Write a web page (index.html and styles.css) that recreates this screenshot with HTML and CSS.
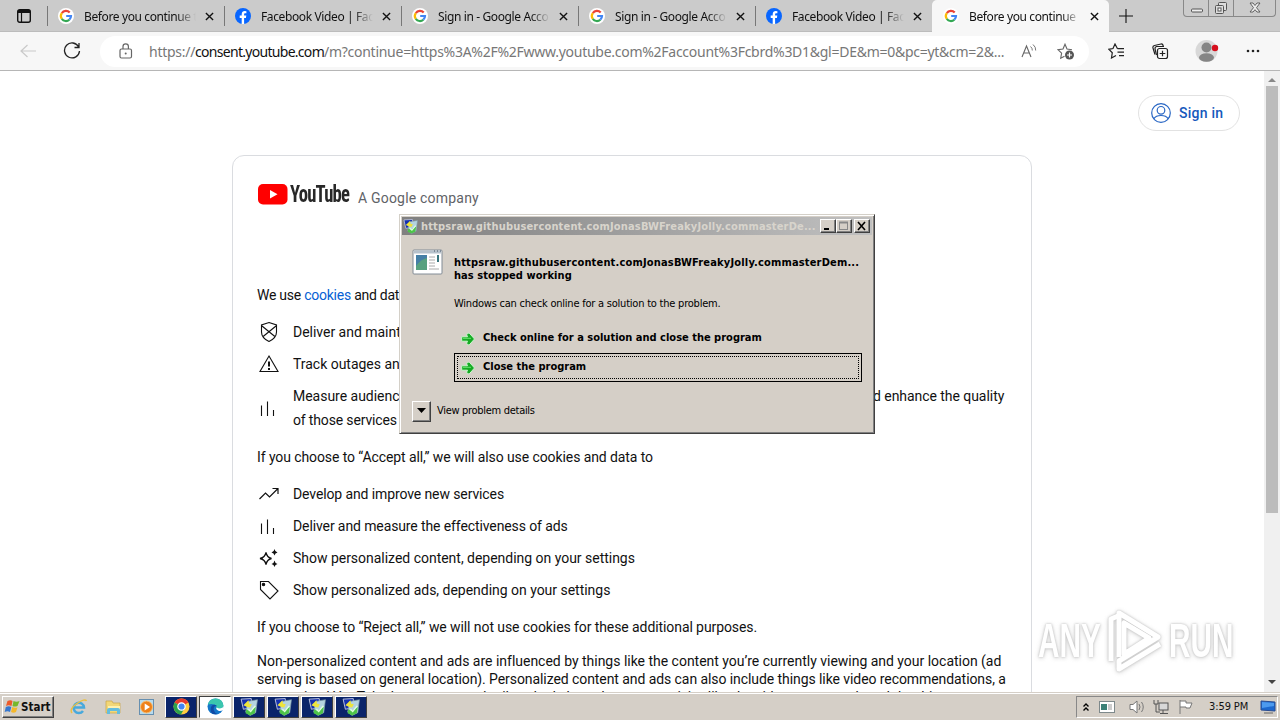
FILE: index.html
```html
<!DOCTYPE html>
<html lang="en">
<head>
<meta charset="utf-8">
<title>Before you continue to YouTube</title>
<link rel="stylesheet" href="styles.css">
</head>
<body>
<svg class="defs" aria-hidden="true">
  <symbol id="google" viewBox="0 0 16 16"><circle cx="8" cy="8" r="8" fill="#fff"/><g fill="none" stroke-width="2.2"><path d="M3.8 5.1A5 5 0 0 1 11.7 4.6" stroke="#ea4335"/><path d="M3.8 5.1A5 5 0 0 0 3.8 10.9" stroke="#fbbc05"/><path d="M3.8 10.9A5 5 0 0 0 11.3 11.7" stroke="#34a853"/><path d="M11.3 11.7A5 5 0 0 0 13 8H8.2" stroke="#4285f4"/></g></symbol>
  <symbol id="facebook" viewBox="0 0 16 16"><circle cx="8" cy="8" r="8" fill="#0866ff"/><path d="M6.700 16V10H4.700V7.600h2V6.200C6.700 3.800 8 3 9.700 3l1.700.2v2h-1c-1 0-1.300.5-1.300 1.300v1.100h2.200L10.900 10H9.100v6z" fill="#fff"/></symbol>
  <symbol id="close" viewBox="0 0 10 10"><path d="M1 1l8 8M9 1L1 9" stroke="#111" stroke-width="1.5"/></symbol>
  <symbol id="bars" viewBox="0 0 24 24"><path d="M4.500 9.500V20M10.500 5.500V20M16.500 14V20" stroke="#111" stroke-width="1.100" fill="none"/></symbol>
  <symbol id="app" viewBox="0 0 16 16"><path d="M1 1l9-.5.5 8L3 10z" fill="#1430b0" stroke="#c9cfe2" stroke-width=".8"/><path d="M7 3l8.500-1.500L14 13l-5 2.500-4-3z" fill="#b4d3e0" stroke="#7d99a6" stroke-width=".6"/><path d="M3 6.500L7.500 2l.5 3 2.500.5L9 8.500 6.500 8z" fill="#eee43c"/><path d="M5.500 10l3 1.500L14 8l-.8 5.500L9 15.500l-4-2z" fill="#4ec44a"/><path d="M7.500 10l2 2 4-5" fill="none" stroke="#e2ffdf" stroke-width="1.200"/></symbol>
  <symbol id="arrow" viewBox="0 0 14 14"><path d="M.7 4.800h5.800L5.500 2.500 8 .8 13.500 7 8 13.200 5.500 11.500l1-2.300H.7z" fill="#16aa24" stroke="#c9f6cb" stroke-width="1"/><path d="M2 6.300h8" stroke="#6be571"/></symbol>
</svg>
<div class="screen">
  <header class="tabbar">
    <div class="tab-menu"><svg width="14" height="14" viewBox="0 0 14 14"><rect x=".7" y=".7" width="12.600" height="12.600" rx="2" fill="none" stroke="#111" stroke-width="1.4"/><path d="M1 1h12v3H1z" fill="#111"/><path d="M4.500 4v9" stroke="#111" stroke-width="1.2"/></svg></div>
    <div class="tab"><svg class="fav"><use href="#google"/></svg><span class="tab-title">Before you continue t</span><svg class="x"><use href="#close"/></svg></div>
    <div class="tab"><svg class="fav"><use href="#facebook"/></svg><span class="tab-title">Facebook Video | Fac</span><svg class="x"><use href="#close"/></svg></div>
    <div class="tab"><svg class="fav"><use href="#google"/></svg><span class="tab-title">Sign in - Google Acco</span><svg class="x"><use href="#close"/></svg></div>
    <div class="tab"><svg class="fav"><use href="#google"/></svg><span class="tab-title">Sign in - Google Acco</span><svg class="x"><use href="#close"/></svg></div>
    <div class="tab"><svg class="fav"><use href="#facebook"/></svg><span class="tab-title">Facebook Video | Fac</span><svg class="x"><use href="#close"/></svg></div>
    <div class="tab active"><svg class="fav"><use href="#google"/></svg><span class="tab-title">Before you continue</span><svg class="x"><use href="#close"/></svg></div>
    <div class="newtab"><svg width="14" height="14"><path d="M7 0v14M0 7h14" stroke="#111" stroke-width="1.1"/></svg></div>
    <div class="caption">
      <span class="cap"><svg width="25" height="16"><rect x="7.500" y="9" width="11" height="3" rx="1" fill="#eee" stroke="#555"/></svg></span>
      <span class="cap"><svg width="25" height="16" fill="#ddd" stroke="#555"><rect x="9.500" y="2.500" width="8" height="8" rx="1"/><rect x="6.500" y="5.500" width="8" height="8" rx="1"/><rect x="9" y="8" width="3" height="3" fill="#fff"/></svg></span>
      <span class="cap wide"><svg width="42" height="16"><path d="M16 3h3l2 2.500L23 3h3l-3.500 4.700L26 12h-3l-2-2.300L19 12h-3l3.500-4.300z" fill="#eee" stroke="#555" stroke-width=".9"/></svg></span>
    </div>
  </header>
  <div class="toolbar">
    <div class="tool back"><svg width="16" height="14"><path d="M16 7H1M7.500 1L1 7l6.500 6" fill="none" stroke="#c9c9c9" stroke-width="1.2"/></svg></div>
    <div class="tool reload"><svg width="18" height="18"><path d="M15.700 5A7.500 7.500 0 1 0 16.500 9M16 1v4.500h-4.500" fill="none" stroke="#222" stroke-width="1.3"/></svg></div>
    <div class="address">
      <svg class="lock" width="14" height="16"><rect x="1" y="6" width="11.500" height="9" rx="1.500" fill="none" stroke="#666" stroke-width="1.200"/><path d="M4 6V3.500a2.700 2.700 0 0 1 5.400 0V6" fill="none" stroke="#666" stroke-width="1.200"/><circle cx="6.700" cy="10.500" r="1" fill="#666"/></svg>
      <span class="url">https://<b>consent.youtube.com</b>/m?continue=https%3A%2F%2Fwww.youtube.com%2Faccount%3Fcbrd%3D1&amp;gl=DE&amp;m=0&amp;pc=yt&amp;cm=2&amp;...</span>
      <svg class="read" width="17" height="16"><path d="M1 14L5.500 3 10 14M2.700 10h5.600" fill="none" stroke="#666" stroke-width="1.100"/><path d="M9.500 3.500q2 1.500 1.800 4M12 1.500q3 2.500 2.700 6" fill="none" stroke="#777"/></svg>
      <svg class="addfav" width="18" height="17"><path d="M7.500 13.200L3.700 15.200l.9-5L1 6.700l5-.7L8 1.200l2 4.800 5 .7" fill="none" stroke="#666" stroke-width="1.100"/><circle cx="12.500" cy="12" r="4.500" fill="#555"/><path d="M12.500 9.500v5M10 12h5" stroke="#fff" stroke-width="1.200"/></svg>
    </div>
    <div class="tool fav-tool"><svg width="17" height="16" fill="none" stroke="#222" stroke-width="1.200"><path d="M9.500 5.700L7 1 5 5.500.8 6.300l3.500 3.400L3.500 15 8 12.500M9.500 5.700H16M9.500 9.200H16M11 12.700h5"/></svg></div>
    <div class="tool coll-tool"><svg width="17" height="17" fill="none" stroke="#222" stroke-width="1.200"><path d="M3 11.500L1 5Q.5 3 2.500 2.500L9 1q1.700-.3 2.300 2"/><path d="M4.500 12L3 6q-.3-2 1.500-2.500L12 3.500"/><rect x="5.500" y="5.500" width="10" height="10" rx="2" fill="#f7f7f7"/><path d="M10.500 7.700v5.600M7.700 10.500h5.600"/></svg></div>
    <div class="tool profile"><svg width="24" height="24"><circle cx="11.500" cy="12" r="11" fill="#d8d8d8"/><circle cx="11.500" cy="8.500" r="5" fill="#858585"/><ellipse cx="11.500" cy="18.500" rx="7.500" ry="4.300" fill="#858585"/><circle cx="20" cy="9" r="3.200" fill="#d60f1d"/></svg></div>
    <div class="tool more"><svg width="14" height="4" fill="#222"><circle cx="2" cy="2" r="1.300"/><circle cx="7" cy="2" r="1.300"/><circle cx="12" cy="2" r="1.300"/></svg></div>
  </div>
  <div class="viewport">
    <main class="page">
      <div class="topline"><a class="signin"><svg width="20" height="20" fill="none" stroke="#2866c4" stroke-width="1.200"><circle cx="10" cy="10" r="9.300"/><circle cx="10" cy="7.300" r="3.800"/><path d="M2.800 15.700q2-3.200 7.200-3.200t7.200 3.200"/></svg><span>Sign in</span></a></div>
      <section class="card">
        <div class="brand"><svg width="30" height="21"><rect width="29.500" height="20.500" rx="5" fill="#f00"/><path d="M12 6l7.500 4.300L12 14.600z" fill="#fff"/></svg><span class="yt">YouTube</span><span class="company">A Google company</span></div>
        <p class="intro">We use <a>cookies</a> and data to</p>
        <div class="item"><svg class="ico" viewBox="0 0 24 24" fill="none" stroke="#111" stroke-width="1.100"><path d="M12 2.500L19.500 5v7q0 6-7.500 9.500Q4.500 18 4.500 12V5zM5 6l13.500 11M19 6L5.500 17"/></svg><span>Deliver and maintain Google</span></div>
        <div class="item"><svg class="ico" viewBox="0 0 24 24" fill="none" stroke="#111" stroke-width="1.100"><path d="M12 4L21 19.500H3z"/><path d="M12 9.500v5M12 16v2" stroke-width="2"/></svg><span>Track outages and protect</span></div>
        <div class="item tall"><svg class="ico"><use href="#bars"/></svg><span><i class="l1">Measure audience engagement and site statistics to understand how our services an</i><i class="l1end">d enhance the quality</i><br><i class="l2">of those services</i></span></div>
        <p class="para accept">If you choose to “Accept all,” we will also use cookies and data to</p>
        <div class="item snug"><svg class="ico" viewBox="0 0 24 24" fill="none" stroke="#111" stroke-width="1.200"><path d="M2.500 17l6-6 4 4L21 6.500M15.500 6.500H21V12"/></svg><span>Develop and improve new services</span></div>
        <div class="item snug"><svg class="ico"><use href="#bars"/></svg><span>Deliver and measure the effectiveness of ads</span></div>
        <div class="item"><svg class="ico" viewBox="0 0 24 24"><path d="M9 6.500q1 5 5.500 6-4.500 1-5.500 6-1-5-6-6 5-1 6-6z" fill="none" stroke="#111" stroke-width="1.300"/><path d="M17.500 3q.5 3 3 3.500-2.500.5-3 3-.5-2.500-3-3 2.500-.5 3-3.500zM17.500 14.500q.5 3 3 3.500-2.500.5-3 3-.5-2.500-3-3 2.500-.5 3-3.500z" fill="#111"/></svg><span>Show personalized content, depending on your settings</span></div>
        <div class="item"><svg class="ico" viewBox="0 0 24 24" fill="none" stroke="#111" stroke-width="1.100"><path d="M3.500 3.500v8l9.500 9.500 8-8-9.500-9.500z"/><circle cx="6.500" cy="6.500" r="1.200" fill="#111"/></svg><span>Show personalized ads, depending on your settings</span></div>
        <p class="para reject">If you choose to “Reject all,” we will not use cookies for these additional purposes.</p>
        <div class="fine"><div class="f1">Non-personalized content and ads are influenced by things like the content you’re currently viewing and your location (ad</div><div class="f2">serving is based on general location). Personalized content and ads can also include things like video recommendations, a</div><div class="f3">customized YouTube homepage, and tailored ads based on past activity, like the videos you watch and the things</div></div>
      </section>
    </main>
    <div class="scroll"><svg width="16" height="15"><path d="M4 11l4-4 4 4z" fill="#888"/></svg><div class="thumb"></div><svg class="down" width="16" height="15"><path d="M4 4l4 4 4-4z" fill="#444"/></svg></div>
  </div>
  <footer class="taskbar">
    <div class="start"><svg width="17" height="16" viewBox="0 0 16 16"><path d="M3 2q3-1.500 5 0L7 7Q4 5.500 1.500 7z" fill="#ed5b2b"/><path d="M9 2q3 1.600 6 0l-2 5q-3 1-5 0z" fill="#77b82b"/><path d="M1.300 8q3-1.500 5.500 0L5.500 13Q3 11.500.2 13z" fill="#3577cf"/><path d="M7.800 8q2.500 1.500 5.200.3L11.500 13q-2.500 1.500-5 0z" fill="#f5b82a"/></svg><span>Start</span></div>
    <div class="quick">
      <svg width="18" height="18" fill="none"><path d="M4.500 9.500H14A5.200 5.200 0 1 0 13 13" stroke="#48a9dc" stroke-width="2.500"/><path d="M2 15Q-1 11 7 5.500T16.500 3" stroke="#ebc043" stroke-width="1.500"/></svg>
      <svg width="18" height="18"><path d="M2 3h6l1 2h7v10H2z" fill="#f2d778" stroke="#caa346" stroke-width=".7"/><path d="M4 8h12v4H4z" fill="#fff1ad"/><path d="M3 16v-4q0-2 2-2h9q2 0 2 2v4h-3v-3H6v3z" fill="#65bddd"/></svg>
      <svg width="18" height="18"><rect x="1.500" y="1.500" width="14" height="15" fill="#b8dbed" stroke="#668fb0"/><circle cx="8.500" cy="9" r="6" fill="#ee8119" stroke="#f9bf74"/><path d="M6.700 5.500v7l5.300-3.500z" fill="#fff"/></svg>
    </div>
    <div class="tasks">
      <div class="task"><svg width="17" height="17"><circle cx="8.500" cy="8.500" r="8" fill="#ffcd40"/><path d="M8.500 8.500L1.600 4.500A8 8 0 0 1 15.400 4.500z" fill="#e83a2e"/><path d="M1.600 4.500A8 8 0 0 0 8 16.500L11 11 8.500 8.500z" fill="#2da24b"/><circle cx="8.500" cy="8.500" r="3.700" fill="#4285f4" stroke="#fff" stroke-width="1.200"/></svg></div>
      <div class="task selected"><svg width="17" height="17"><circle cx="8.500" cy="8.500" r="8" fill="#1476c9"/><path d="M.8 6.500Q2.500.5 8.500.5q7 0 8 7-.2 4-6 3.500l-1.500-.7q1-1 .3-2.500-2-2.500-8.500-1.300z" fill="#3bc6ae"/><path d="M9.500 9.500q-1 2 2 3.300 2 .7 5-.8l.5-4.500q-1 3-5 3z" fill="#fff"/><path d="M4 9q2-4 6-1.200Q6 8 6.800 12q.7 3 4 4.200Q2 17.500 4 9" fill="#124aa4"/></svg></div>
      <div class="task"><svg width="18" height="18"><use href="#app"/></svg></div><div class="task"><svg width="18" height="18"><use href="#app"/></svg></div><div class="task"><svg width="18" height="18"><use href="#app"/></svg></div><div class="task"><svg width="18" height="18"><use href="#app"/></svg></div>
    </div>
    <div class="tray">
      <svg width="8" height="10"><path d="M1.500 4.500L4 2l2.500 2.500M1.500 8.500L4 6l2.500 2.500" fill="none" stroke="#000" stroke-width="1.400"/></svg>
      <svg class="t2" width="17" height="14"><rect x=".5" y="1.500" width="15" height="11" fill="#fff" stroke="#7e898b"/><path d="M2 4h6v6H2z" fill="#3c8177"/><path d="M9 5h4M9 7h4M9 9h4" stroke="#999"/></svg>
      <svg class="t3" width="17" height="16" fill="none" stroke="#777"><path d="M1 5.500h3L8 2v12l-4-3.500H1z" fill="#fff"/><path d="M10 5q2 3 0 6M12.500 3q3.500 5 0 10"/></svg>
      <svg class="t4" width="17" height="16" stroke="#555"><path d="M1 1v4h4V1M3 5v8h4" fill="none"/><rect x="6" y="4" width="9" height="7" fill="#d8d8d8"/><path d="M10 11v3M7 14.500h8"/></svg>
      <svg class="t5" width="17" height="16"><path d="M2 1v14M2 2h6v2h6l-2 5H8V8H2" fill="#fff" stroke="#777"/></svg>
      <span class="clock">3:59 PM</span>
      <svg class="desk" width="17" height="14"><path d="M1 1l14 1v9L1 10z" fill="#1d68ce" stroke="#2b4d91"/><path d="M2 2l12 1v3L2 8z" fill="#4d9aee"/><path d="M4 13h9" stroke="#666"/></svg>
    </div>
  </footer>
  <div class="watermark"><span>ANY</span><svg width="56" height="64" viewBox="0 0 56 64" fill="none" stroke="#fff" stroke-width="5" stroke-linejoin="round"><path d="M12 48V4l39 24-39 24v8L53 35"/><path d="M4 52V10l7-3M17 14v31l25-16z"/></svg><span class="run">RUN</span></div>
  <div class="dialog">
    <div class="titlebar"><svg width="15" height="15"><use href="#app"/></svg><span class="dtitle">httpsraw.githubusercontent.comJonasBWFreakyJolly.commasterDe...</span><span class="win"><svg><path d="M3 9h5" stroke="#000" stroke-width="2"/></svg></span><span class="win"><svg><rect x="2.500" y="2.500" width="8" height="7" fill="none" stroke="#888"/><path d="M2 2.500h9" stroke="#888" stroke-width="2"/></svg></span><span class="win last"><svg><path d="M3 2l7 8M10 2l-7 8" stroke="#000" stroke-width="1.600"/></svg></span></div>
    <div class="dbody">
      <svg class="program" width="32" height="27"><rect x="1" y="1" width="29" height="24" rx="1" fill="#fff" stroke="#828c96"/><path d="M2 3h27" stroke="#b7c2cc" stroke-width="3"/><path d="M22 2h1M25 2h1M28 2h1" stroke="#456"/><rect x="4" y="6" width="11" height="15" fill="#457fa6"/><path d="M4 17q5-7 11-8v12H4z" fill="#57a17f"/><path d="M17 8h6M17 11h6M17 14h6M17 17h6M17 20h10" stroke="#aaa"/><path d="M26 6v7" stroke="#36747d" stroke-width="2"/></svg>
      <div class="dcontent"><div class="headline"><span class="h1">httpsraw.githubusercontent.comJonasBWFreakyJolly.commasterDem...</span><br><span class="h2">has stopped working</span></div><div class="msg">Windows can check online for a solution to the problem.</div><div class="choice"><svg width="14" height="14"><use href="#arrow"/></svg><span class="c1">Check online for a solution and close the program</span></div><div class="choice focused"><svg width="14" height="14"><use href="#arrow"/></svg><span class="c1">Close the program</span></div></div>
    </div>
    <div class="details"><span class="drop"><svg width="10" height="6"><path d="M0 0h9L4.500 5z" fill="#000"/></svg></span><span class="dlabel">View problem details</span></div>
  </div>
</div>
</body>
</html>
```
FILE: styles.css
```css
* { box-sizing: border-box; }
body { margin: 0; overflow: hidden; background: #fff; color: #111; }
svg { flex: none; display: block; }
.defs { position: absolute; width: 0; height: 0; }
.screen { width: 1280px; height: 720px; display: flex; flex-direction: column; position: relative; overflow: hidden; }
.tabbar { height: 32px; flex: none; display: flex; background: #cbcbcb; border-bottom: 1px solid #bcbcbc; font: 12px "Noto Sans", sans-serif; }
.tab-menu { width: 47px; padding: 9px 0 0 17px; }
.tab { width: 177px; height: 32px; padding: 0 9px 0 11px; display: flex; align-items: center; position: relative; }
.tab::before { content: ""; width: 1px; height: 20px; background: #777; position: absolute; left: 0; top: 6px; }
.fav { width: 16px; height: 16px; }
.tab-title { width: 113px; margin-left: 10px; overflow: hidden; white-space: nowrap; letter-spacing: -.38px; mask-image: linear-gradient(90deg, #000 82%, transparent 99%); }
.x { width: 9px; height: 9px; margin-left: 8px; margin-top: 1px; }
.active { background: #f7f7f7; border-radius: 5px 5px 0 0; }
.active::before { display: none; }
.newtab { width: 74px; padding: 9px 0 0 10px; }
.caption { display: flex; height: 17px; border: 1px solid #888; border-top: 0; border-radius: 0 0 4px 4px; overflow: hidden; width: 93px; }
.cap { width: 25px; border-right: 1px solid #888; }
.cap.wide { width: 42px; border: 0; }
.toolbar { height: 39px; flex: none; background: #f7f7f7; border-bottom: 1px solid #b6b6b6; display: flex; align-items: center; }
.tool { display: flex; justify-content: center; }
.back { width: 56px; }
.reload { width: 31px; }
.address { width: 989px; height: 31px; margin-left: 13px; border-radius: 16px; background: #fff; display: flex; align-items: center; padding-left: 19px; }
.url { width: 866px; margin-left: 16px; white-space: nowrap; color: #777; font: 14px "Noto Sans", sans-serif; letter-spacing: -.27px; }
.url b { font-weight: 400; color: #111; letter-spacing: -.71px; }
.read { margin-left: 6px; }
.addfav { margin-left: 19px; }
.fav-tool { width: 54px; }
.coll-tool { width: 34px; }
.profile { width: 60px; }
.more { width: 32px; }
.viewport { flex: 1; min-height: 0; display: flex; overflow: hidden; }
.page { width: 1264px; font: 14px/24px Roboto, sans-serif; }
.topline { height: 84px; display: flex; justify-content: flex-end; padding: 24px 24px 0 0; }
.signin { width: 102px; height: 36px; border: 1px solid #e2e2e2; border-radius: 18px; display: flex; align-items: center; gap: 8px; padding-left: 12px; color: #1558bc; font-weight: 500; letter-spacing: .25px; }
.card { width: 800px; height: 650px; margin-left: 232px; border: 1px solid #dadce0; border-radius: 12px; padding: 26px 24px; white-space: nowrap; }
.brand { display: flex; height: 28px; align-items: flex-start; padding: 2px 0 0 1px; }
.yt { font: 700 23px/24px "Roboto Condensed", Roboto, sans-serif; letter-spacing: -1px; margin: -1px 0 0 2px; width: 60px; transform: scaleX(.81); transform-origin: left; color: #282828; }
.company { color: #5f6368; margin: 2px 0 0 8px; letter-spacing: .2px; }
.intro { margin: 73px 0 9px; letter-spacing: -.25px; }
.intro a { color: #065fd4; }
.item { height: 32px; display: flex; align-items: center; gap: 12px; letter-spacing: -.02px; }
.snug { letter-spacing: -.11px; }
.item i { font-style: normal; }
.ico { width: 24px; height: 24px; }
.tall { height: 56px; }
.l1 { display: inline-block; width: 580px; overflow: hidden; vertical-align: top; }
.l1end { letter-spacing: -.05px; }
.l2 { letter-spacing: -.15px; }
.accept { margin: 9px 0 6px; line-height: 24px; height: 27px; letter-spacing: -.09px; }
.reject { margin: 9px 0 13px; line-height: 24px; letter-spacing: -.085px; }
.fine { line-height: 18px; }
.f1 { letter-spacing: -.015px; }
.f2 { letter-spacing: -.075px; }
.scroll { width: 16px; background: #f0f0f0; }
.scroll .thumb { height: 427px; width: 12px; margin: 0 2px; background: #bcbcbc; }
.down { margin-top: 163px; }
.taskbar { height: 28px; flex: none; background: #d5cfc7; border-top: 1px solid #d5cfc7; box-shadow: inset 0 1px #fff; display: flex; align-items: center; padding: 2px; font: 11px "DejaVu Sans Condensed", sans-serif; }
.start { width: 52px; height: 22px; display: flex; align-items: center; padding-left: 1px; font-weight: 700; font-size: 11.5px; border: 1px solid; border-color: #fff #404040 #404040 #fff; box-shadow: inset -1px -1px #808080; }
.quick { display: flex; gap: 16px; margin-left: 16px; width: 95px; }
.tasks { display: flex; gap: 2px; }
.task { width: 32px; height: 22px; display: grid; place-items: center; background: #0a246a; border: 1px solid; border-color: #fff #404040 #404040 #fff; }
.selected { background: #fff; border-color: #404040 #fff #fff #404040; }
.tray { margin-left: auto; width: 202px; height: 22px; display: flex; align-items: center; border: 1px solid; border-color: #888 #fff #fff #888; padding-left: 5px; }
.t2 { margin-left: 9px; }.t3 { margin-left: 13px; }.t4 { margin-left: 7px; }.t5 { margin-left: 8px; }
.clock { margin-left: 14px; width: 51px; white-space: nowrap; letter-spacing: -.1px; }
.watermark { position: absolute; left: 1038px; top: 609px; display: flex; align-items: center; color: #fff; font: 700 48px/64px "Liberation Sans", sans-serif; filter: drop-shadow(0 0 1px #aaa) drop-shadow(0 1px 2px #ccc); opacity: .75; }
.watermark span { width: 64px; transform: scaleX(.62); transform-origin: left; }
.watermark svg { margin-left: 5px; }.watermark .run { margin-left: 6px; }
.dialog { position: absolute; left: 399px; top: 214px; width: 476px; height: 220px; background: #d5cfc7; border: 1px solid; border-color: #d4d0c8 #404040 #404040 #d4d0c8; box-shadow: inset 1px 1px #fff, inset -1px -1px #808080; padding: 2px; font: 11px/13px "DejaVu Sans Condensed", sans-serif; color: #000; white-space: nowrap; }
.titlebar { height: 18px; background: linear-gradient(90deg, #808080, #c0c0c0); display: flex; align-items: center; padding: 0 2px 0 1px; color: #d8d4cc; font-weight: 700; }
.dtitle { margin-left: 3px; width: 399px; letter-spacing: .17px; }
.win { width: 16px; height: 14px; background: #d5cfc7; border: 1px solid; border-color: #fff #404040 #404040 #fff; box-shadow: inset -1px -1px #808080; }
.win svg { width: 14px; height: 12px; }
.last { margin-left: 2px; }
.dbody { height: 161px; display: flex; padding: 14px 9px 0 10px; }
.dcontent { margin-left: 10px; padding-top: 7px; width: 408px; }
.headline, .choice { font-weight: 700; }
.h1 { letter-spacing: .17px; }
.h2 { letter-spacing: .05px; }
.msg { margin: 15px 0 14px; letter-spacing: -.22px; }
.choice { height: 29px; width: 408px; padding-left: 6px; display: flex; align-items: center; gap: 8px; border: 1px solid transparent; }
.c1 { margin-top: -2px; }
.focused { border-color: #000; outline: 1px dotted #000; outline-offset: -4px; }
.details { height: 30px; display: flex; align-items: center; gap: 6px; padding-left: 10px; }
.dlabel { letter-spacing: -.3px; margin-top: -2px; }
.drop { width: 19px; height: 21px; display: grid; place-items: center; border: 1px solid; border-color: #fff #404040 #404040 #fff; box-shadow: inset -1px -1px #808080; }
```
